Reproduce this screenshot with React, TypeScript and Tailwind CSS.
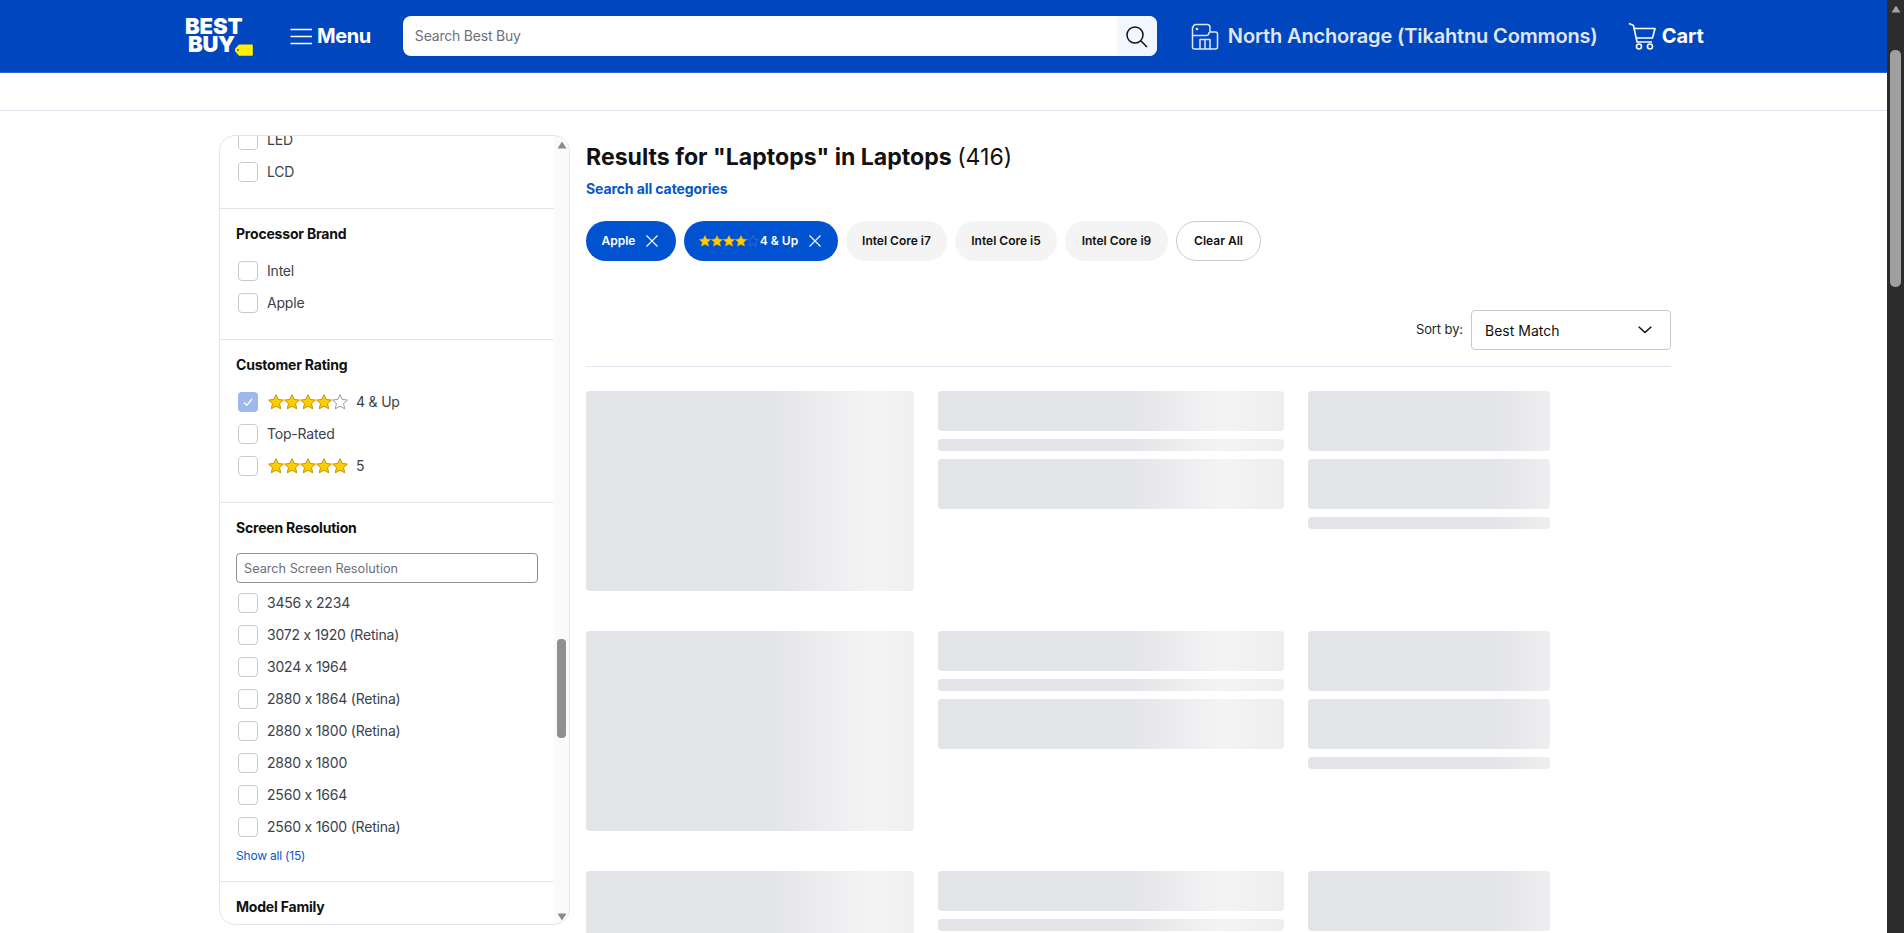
import React from "react";

const font = "font-['Inter','Liberation_Sans',sans-serif] [font-feature-settings:'calt'_0]";

function Star({ filled, size, muted }: { filled: boolean; size: number; muted?: boolean }) {
  return (
    <svg width={size} height={size} viewBox="0 0 24 24" className="block shrink-0">
      <path
        d="M12 1l3.300 7.200 7.900.9-5.900 5.300 1.700 7.800L12 18.300l-7 3.900 1.700-7.800-5.900-5.300 7.900-.9z"
        fill={filled ? "#ffce00" : "none"}
        stroke={filled ? (muted ? "#e0a800" : "#c28a00") : muted ? "#4a6fc0" : "#8f939b"}
        strokeWidth="1.4"
        strokeLinejoin="round"
      />
    </svg>
  );
}

function Stars({ count, size, muted }: { count: number; size: number; muted?: boolean }) {
  return (
    <span className="flex items-center">
      {[0, 1, 2, 3, 4].map((i) => (
        <Star key={i} filled={i < count} size={size} muted={muted} />
      ))}
    </span>
  );
}

function Row({ label, checked, stars }: { label: string; checked?: boolean; stars?: number }) {
  return (
    <div className="flex h-[32px] items-center pl-[18px] text-[14px] tracking-[-0.2px] text-[#3d4249]">
      {checked ? (
        <span className="flex h-[20px] w-[20px] shrink-0 items-center justify-center rounded-[4px] bg-[#9db8ec]">
          <svg width="12" height="12" viewBox="0 0 12 12" fill="none" stroke="#fff" strokeWidth="1.3">
            <path d="M2 6.5l2.8 2.8L10 3" />
          </svg>
        </span>
      ) : (
        <span className="h-[20px] w-[20px] shrink-0 rounded-[4px] border border-[#c5cbd5] bg-white" />
      )}
      <span className="ml-[9px] flex items-center pb-[1px]">
        {stars ? (
          <span className="ml-[1px] mr-[8px]">
            <Stars count={stars} size={16} />
          </span>
        ) : null}
        {label}
      </span>
    </div>
  );
}

function Section({ title, children }: { title: string; children: React.ReactNode }) {
  return (
    <div className="border-b border-[#e5e5e8] pb-[20px] pt-[15px]">
      <h3 className="mb-[11px] pl-[16px] text-[14px] leading-[20px] font-bold tracking-[-0.2px] text-[#111]">{title}</h3>
      {children}
    </div>
  );
}

function Sidebar() {
  return (
    <aside className="flex h-[790px] w-[351px] shrink-0 overflow-hidden rounded-[16px] border border-[#e3e4e8] bg-white">
      <div className="min-w-0 flex-1 overflow-hidden">
        <div className="-mt-[12px]">
          <div className="border-b border-[#e5e5e8] pb-[20px]">
            <Row label="LED" />
            <Row label="LCD" />
          </div>
          <Section title="Processor Brand">
            <Row label="Intel" />
            <Row label="Apple" />
          </Section>
          <Section title="Customer Rating">
            <Row label="4 & Up" checked stars={4} />
            <Row label="Top-Rated" />
            <Row label="5" stars={5} />
          </Section>
          <div className="border-b border-[#e5e5e8] pb-[16px] pt-[15px]">
            <h3 className="mb-[15px] pl-[16px] text-[14px] leading-[20px] font-bold tracking-[-0.2px] text-[#111]">Screen Resolution</h3>
            <div className="mx-[16px] mb-[4px] flex h-[30px] w-[302px] items-center rounded-[4px] border border-[#8a8f9a] px-[7px] pt-[1px] text-[12.7px] text-[#6b7078]">
              Search Screen Resolution
            </div>
            <Row label="3456 x 2234" />
            <Row label="3072 x 1920 (Retina)" />
            <Row label="3024 x 1964" />
            <Row label="2880 x 1864 (Retina)" />
            <Row label="2880 x 1800 (Retina)" />
            <Row label="2880 x 1800" />
            <Row label="2560 x 1664" />
            <Row label="2560 x 1600 (Retina)" />
            <div className="pl-[16px] pt-[4px] text-[12px] leading-[18px] tracking-[-0.2px] text-[#0457c8]">Show all (15)</div>
          </div>
          <div className="pt-[15px]">
            <h3 className="pl-[16px] text-[14px] leading-[20px] font-bold tracking-[-0.2px] text-[#111]">Model Family</h3>
          </div>
        </div>
      </div>
      <div className="flex w-[15px] shrink-0 flex-col items-center bg-[#fafafa]">
        <svg width="10" height="8" viewBox="0 0 10 8" className="mt-[5px] shrink-0">
          <path d="M5 0.5L9.5 7.5H0.5z" fill="#8a8a8a" />
        </svg>
        <div className="mt-[490px] h-[99px] w-[9px] rounded-[4px] bg-[#8f8f8f]" />
        <svg width="10" height="8" viewBox="0 0 10 8" className="mt-[175px] shrink-0">
          <path d="M5 7.5L9.5 0.5H0.5z" fill="#8a8a8a" />
        </svg>
      </div>
    </aside>
  );
}

function XIcon() {
  return (
    <svg width="12" height="12" viewBox="0 0 12 12" stroke="currentColor" strokeWidth="1.1" className="shrink-0">
      <path d="M0.5 0.5l11 11M11.5 0.5l-11 11" />
    </svg>
  );
}

function Chip({ children, active, outline, w }: { children: React.ReactNode; active?: boolean; outline?: boolean; w: string }) {
  const tone = active
    ? "bg-[#0052d1] text-white"
    : outline
    ? "border border-[#c5cbd5] bg-white text-[#111]"
    : "bg-[#f4f4f4] text-[#111]";
  return (
    <div className={`flex h-[40px] items-center justify-center rounded-full text-[12px] font-semibold ${w} ${tone}`}>
      {children}
    </div>
  );
}

const g1 = "bg-[linear-gradient(90deg,#e3e4e8_55%,#f4f4f5_87%,#f0f0f2_100%)]";
const g2 = "bg-[linear-gradient(90deg,#e3e4e8_55%,#f4f4f5_82%,#eeeef0_100%)]";
const g3 = "bg-[linear-gradient(90deg,#e3e4e8_75%,#eeeef0_100%)]";

function SkeletonRow() {
  return (
    <div className="mb-[40px] flex gap-[24px]">
      <div className={`h-[200px] w-[328px] shrink-0 rounded-[4px] ${g1}`} />
      <div className="flex w-[346px] shrink-0 flex-col gap-[8px]">
        <div className={`h-[40px] rounded-[4px] ${g2}`} />
        <div className={`h-[12px] rounded-[4px] ${g2}`} />
        <div className={`h-[50px] rounded-[4px] ${g2}`} />
      </div>
      <div className="flex w-[242px] shrink-0 flex-col gap-[8px]">
        <div className={`h-[60px] rounded-[4px] ${g3}`} />
        <div className={`h-[50px] rounded-[4px] ${g3}`} />
        <div className={`h-[12px] rounded-[4px] ${g3}`} />
      </div>
    </div>
  );
}

function Logo() {
  return (
    <div className="relative h-[38px] w-[68px] shrink-0 text-white">
      <div className="text-[22px] leading-[18px] font-black tracking-[-0.1px]">BEST</div>
      <div className="pl-[3px] text-[22px] leading-[18px] font-black tracking-[-0.3px]">BUY</div>
      <svg width="18" height="12" viewBox="0 0 18 12" className="absolute right-0 top-[27px]">
        <path d="M4 0.5H17a0.8 0.8 0 0 1 .8.8V11a.8.8 0 0 1-.8.8H4L.3 7.5a2 2 0 0 1 0-3z" fill="#fff200" />
        <circle cx="3" cy="6" r="0.9" fill="#0046be" />
      </svg>
    </div>
  );
}

function Header() {
  return (
    <header className="flex h-[73px] shrink-0 items-center border-b border-[#1f66dc] bg-[#0046be] pl-[185px]">
      <Logo />
      <svg width="23" height="17" viewBox="0 0 23 17" stroke="#fff" strokeWidth="1.7" className="ml-[37px] shrink-0">
        <path d="M0.5 1.5h21.5M0.5 8.5h21.5M0.5 15.5h21.5" />
      </svg>
      <span className="ml-[4px] text-[20px] font-bold tracking-[-0.4px] text-white">Menu</span>
      <div className="ml-[32px] flex h-[40px] w-[754px] shrink-0 overflow-hidden rounded-[8px] bg-white">
        <div className="flex flex-1 items-center pb-[1px] pl-[12px] text-[14px] tracking-[-0.2px] text-[#6e7178]">Search Best Buy</div>
        <div className="flex w-[40px] items-center justify-center bg-[#f2f7ff]">
          <svg width="23" height="23" viewBox="0 0 23 23" fill="none" stroke="#111" strokeWidth="1.5">
            <circle cx="10" cy="10" r="8" />
            <path d="M15.8 15.8L22 22" />
          </svg>
        </div>
      </div>
      <svg width="28" height="28" viewBox="0 0 28 28" fill="none" stroke="#e0e6ef" strokeWidth="1.5" strokeLinejoin="round" className="ml-[34px] shrink-0">
        <path d="M2 5.5a3 3 0 0 1 3-3h11a3 3 0 0 1 3 3V10h5.5a2 2 0 0 1 2 2v13a2 2 0 0 1-2 2h-21a2 2 0 0 1-2-2V5.500z" />
        <path d="M2 13.500h13a3 3 0 0 0 3-2V10" />
        <path d="M9 27V17.500h10V27M14 17.500V27" />
        <circle cx="6" cy="7" r="0.6" fill="#e0e6ef" />
      </svg>
      <span className="ml-[9px] text-[20px] font-semibold tracking-[-0.15px] whitespace-nowrap text-[#e0e6ef]">North Anchorage (Tikahtnu Commons)</span>
      <svg width="28" height="28" viewBox="0 0 28 28" fill="none" stroke="#fff" strokeWidth="1.6" strokeLinejoin="round" className="ml-[30px] shrink-0">
        <path d="M1 1.500l4.500 2L9 20h15" />
        <path d="M6 6.500h21l-2.500 9.500H8" />
        <circle cx="11" cy="24.500" r="2.500" />
        <circle cx="22" cy="24.500" r="2.500" />
      </svg>
      <span className="ml-[6px] text-[20px] font-bold text-white">Cart</span>
    </header>
  );
}

function PageScrollbar() {
  return (
    <div className="flex h-full w-[17px] shrink-0 flex-col items-center bg-[#2c2c2c]">
      <svg width="10" height="8" viewBox="0 0 10 8" className="mt-[5px] shrink-0">
        <path d="M5 0.5L9.500 7.500H0.500z" fill="#a0a0a0" />
      </svg>
      <div className="mt-[37px] h-[237px] w-[11px] rounded-[5px] bg-[#9f9f9f]" />
    </div>
  );
}

export default function App() {
  return (
    <div className={`flex h-[933px] w-[1904px] overflow-hidden bg-white ${font}`}>
      <div className="flex min-w-0 flex-1 flex-col overflow-hidden">
        <Header />
        <div className="h-[38px] shrink-0 border-b border-[#e0e6ef]" />
        <div className="flex gap-[16px] pl-[219px] pt-[24px]">
          <Sidebar />
          <main className="w-[1085px] shrink-0">
            <h1 className="pt-[7px] text-[23.1px] leading-[30px] font-bold text-[#111]">
              Results for "Laptops" in Laptops <span className="font-normal">(416)</span>
            </h1>
            <div className="mt-[8px] text-[14px] leading-[18px] font-bold tracking-[-0.1px] text-[#0457c8]">Search all categories</div>
            <div className="mt-[23px] flex gap-[8px]">
              <Chip active w="w-[90px]">
                <span>Apple</span>
                <span className="ml-[11px] mr-[2px]"><XIcon /></span>
              </Chip>
              <Chip active w="w-[154px]">
                <Stars count={4} size={12} muted />
                <span className="ml-[1px]">4 & Up</span>
                <span className="ml-[11px] mr-[2px]"><XIcon /></span>
              </Chip>
              <Chip w="w-[101px]">Intel Core i7</Chip>
              <Chip w="w-[102px]">Intel Core i5</Chip>
              <Chip w="w-[103px]">Intel Core i9</Chip>
              <Chip outline w="w-[85px]">Clear All</Chip>
            </div>
            <div className="mt-[49px] flex items-center justify-end border-b border-[#e0e6ef] pb-[16px]">
              <span className="mr-[8px] text-[13px] tracking-[-0.1px] text-[#1d252c]">Sort by:</span>
              <div className="flex h-[40px] w-[200px] items-center justify-between rounded-[4px] border border-[#c5cbd5] pl-[13px] pr-[18px] text-[14px] text-[#111]">
                <span>Best Match</span>
                <svg width="14" height="8" viewBox="0 0 14 8" fill="none" stroke="#111" strokeWidth="1.5">
                  <path d="M0.700 0.700L7 6.500l6.300-5.800" />
                </svg>
              </div>
            </div>
            <div className="pt-[24px]">
              <SkeletonRow />
              <SkeletonRow />
              <SkeletonRow />
            </div>
          </main>
        </div>
      </div>
      <PageScrollbar />
    </div>
  );
}
